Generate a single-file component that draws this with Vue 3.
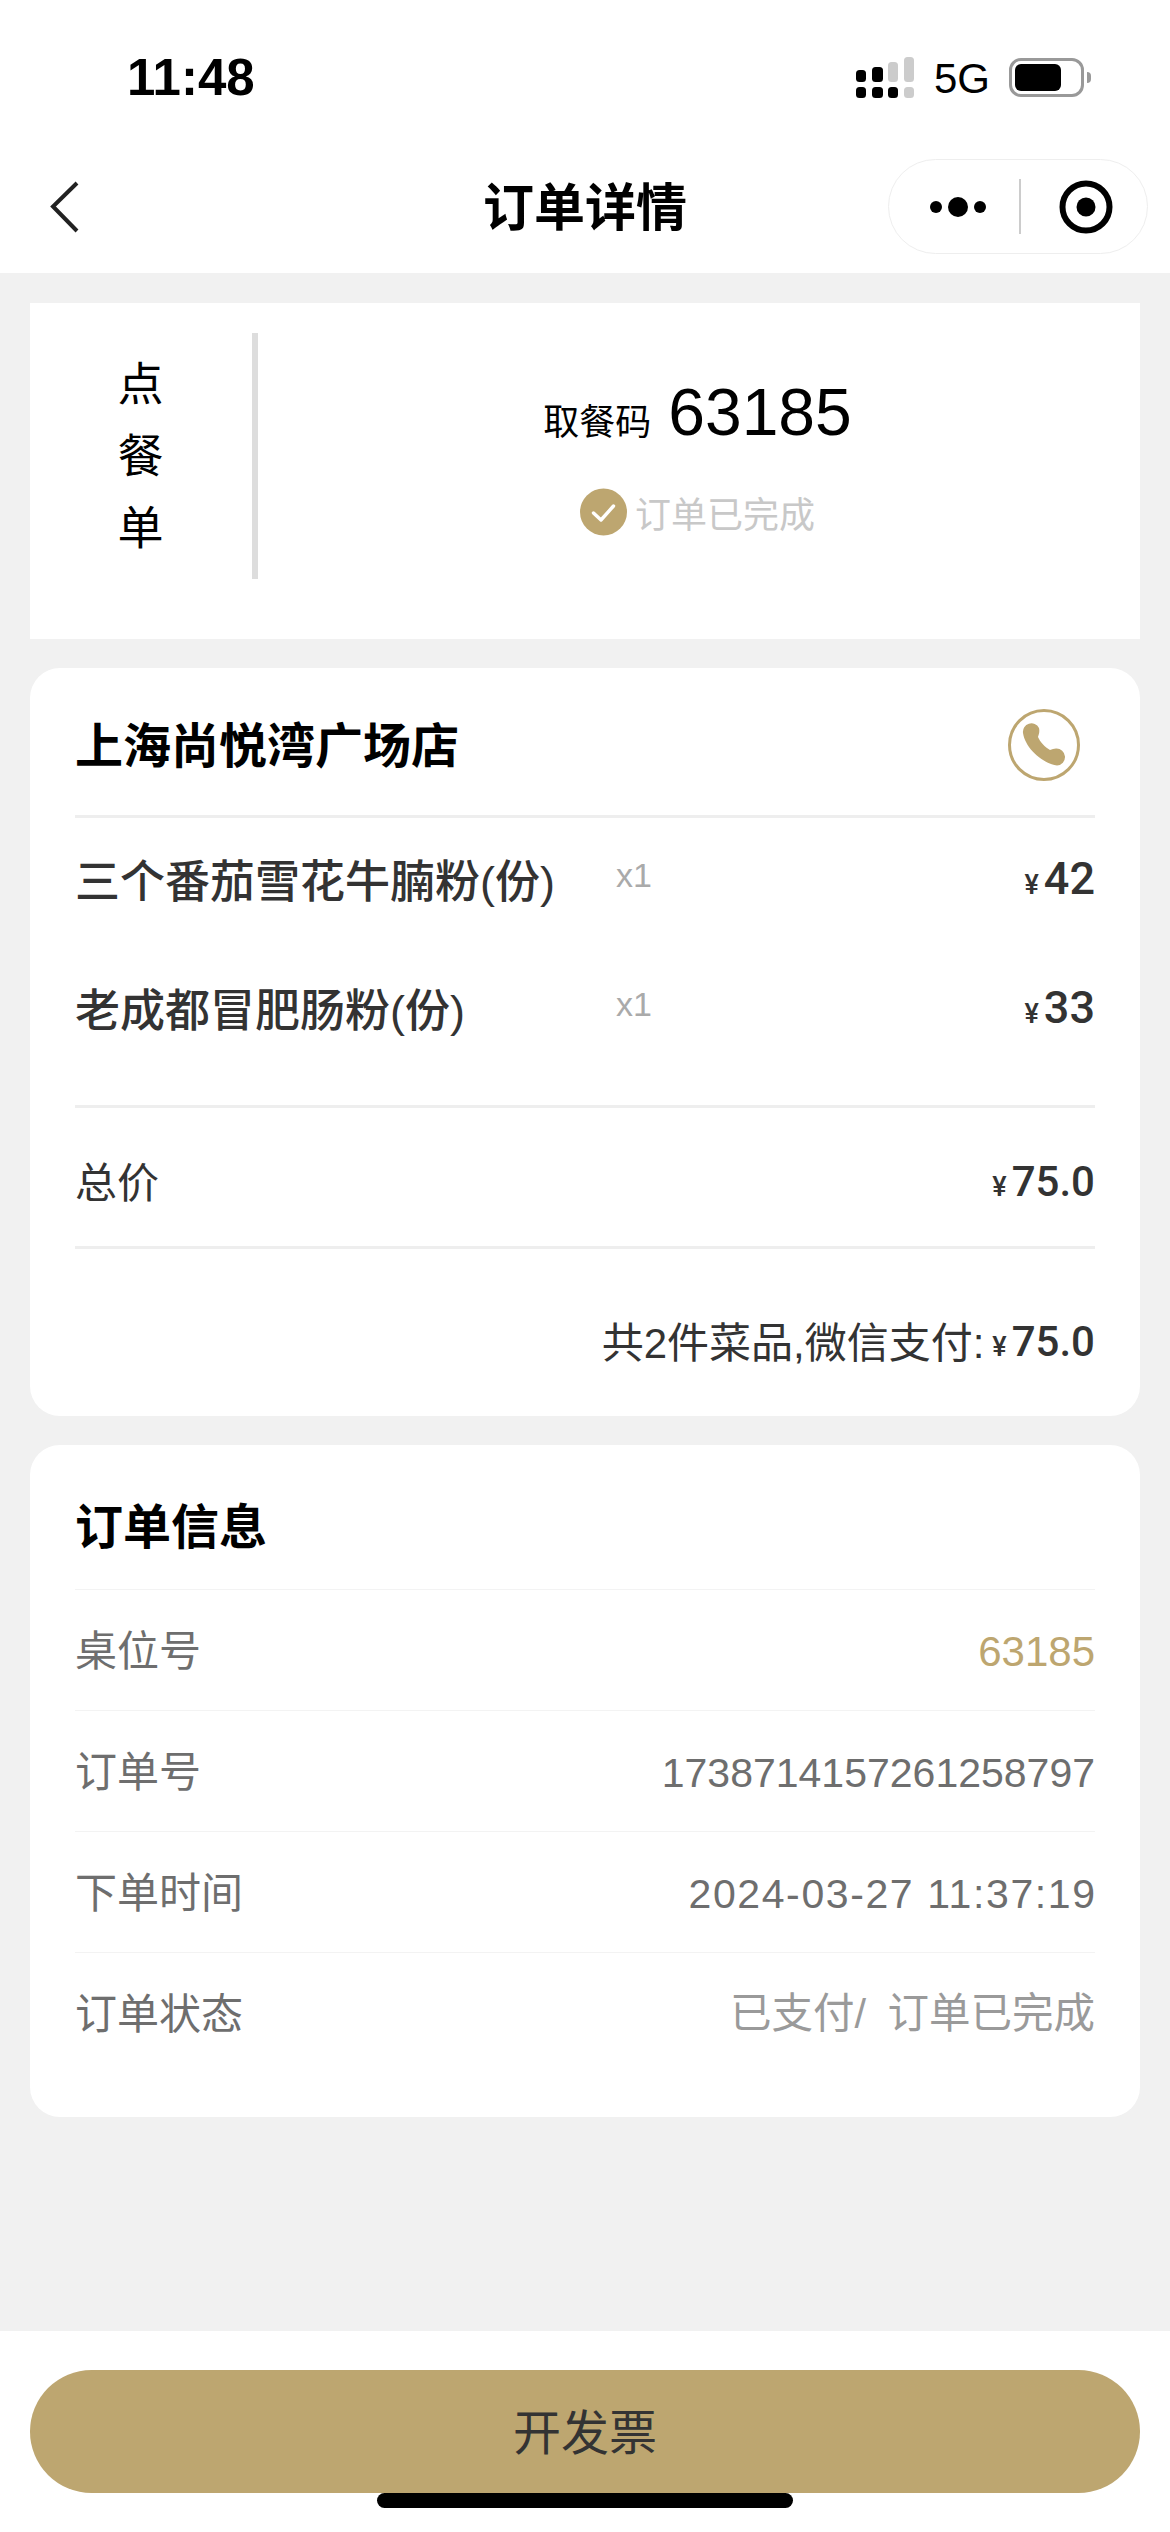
<template>
  <div class="page">
    <div class="statusbar">
      <span class="time">11:48</span>
      <div class="status-right">
        <svg class="signal" width="58" height="41" viewBox="0 0 58 41">
          <rect x="0" y="13" width="10" height="12" rx="3.5" fill="#000" />
          <rect x="16" y="10" width="11" height="15" rx="3.5" fill="#000" />
          <rect x="32" y="5" width="10" height="20" rx="3.5" fill="#ccc" />
          <rect x="48" y="0" width="10" height="25" rx="3.5" fill="#ccc" />
          <rect x="0" y="30" width="10" height="11" rx="3.5" fill="#000" />
          <rect x="16" y="30" width="11" height="11" rx="3.5" fill="#000" />
          <rect x="32" y="30" width="10" height="11" rx="3.5" fill="#000" />
          <rect x="48" y="30" width="10" height="11" rx="3.5" fill="#ccc" />
        </svg>
        <span class="net">5G</span>
        <div class="battery">
          <div class="battery-level"></div>
        </div>
        <div class="battery-nub"></div>
      </div>
    </div>

    <div class="navbar">
      <svg class="back" width="30" height="52" viewBox="0 0 30 52">
        <path d="M27 2 L3 25.5 L27 50" fill="none" stroke="#222" stroke-width="4" />
      </svg>
      <span class="nav-title">订单详情</span>
      <div class="capsule">
        <svg width="66" height="24" viewBox="0 0 66 24">
          <circle cx="8" cy="12" r="6" fill="#000" />
          <circle cx="30" cy="12" r="10" fill="#000" />
          <circle cx="52" cy="12" r="6" fill="#000" />
        </svg>
        <div class="capsule-line"></div>
        <svg width="54" height="54" viewBox="0 0 54 54">
          <circle cx="27" cy="27" r="23.5" fill="none" stroke="#000" stroke-width="6" />
          <circle cx="27" cy="27" r="9.5" fill="#000" />
        </svg>
      </div>
    </div>

    <div class="content">
      <div class="card-ticket">
        <div class="ticket-label">
          <span>点</span>
          <span>餐</span>
          <span>单</span>
        </div>
        <div class="ticket-main">
          <div class="pickup">
            <span class="pickup-label">取餐码</span>
            <span class="pickup-code">63185</span>
          </div>
          <div class="ticket-status">
            <svg width="47" height="48" viewBox="0 0 47 48">
              <circle cx="23.5" cy="24" r="23.5" fill="#bda670" />
              <path d="M13.5 25 L21 32 L33.5 18" fill="none" stroke="#fff" stroke-width="3.4" stroke-linecap="round" stroke-linejoin="round" />
            </svg>
            <span>订单已完成</span>
          </div>
        </div>
      </div>

      <div class="card card-order">
        <div class="store-row">
          <span class="store-name">上海尚悦湾广场店</span>
          <svg class="phone" width="72" height="72" viewBox="0 0 72 72">
            <circle cx="36" cy="36" r="34.5" fill="none" stroke="#bda670" stroke-width="3" />
            <path d="M15 24 A8.5 8.5 0 0 1 31 19 C32 23 30.5 26 30 28 C32 33 37 38 42 41 C44 40.5 46 39.5 48 39.5 A8.5 8.5 0 0 1 49 56.5 C33 54 17 38 15 24 Z" fill="#bda670" />
          </svg>
        </div>
        <div class="items">
          <div v-for="item in items" :key="item.name" class="item-row">
            <span class="item-name">{{ item.name }}</span>
            <span class="item-qty">x{{ item.qty }}</span>
            <span class="price"><i>¥</i>{{ item.price }}</span>
          </div>
        </div>
        <div class="total-row">
          <span>总价</span>
          <span class="price small"><i>¥</i>75.0</span>
        </div>
        <div class="summary-row">
          <span>共2件菜品,微信支付:</span>
          <span class="price small"><i>¥</i>75.0</span>
        </div>
      </div>

      <div class="card card-info">
        <div class="info-title">订单信息</div>
        <div v-for="row in infoRows" :key="row.label" class="info-row">
          <span class="info-label">{{ row.label }}</span>
          <span class="info-value" :class="row.cls">{{ row.value }}</span>
        </div>
      </div>
    </div>

    <div class="footer">
      <div class="invoice-btn">开发票</div>
      <div class="home-bar"></div>
    </div>
  </div>
</template>

<script setup>
const items = [
  { name: '三个番茄雪花牛腩粉(份)', qty: 1, price: 42 },
  { name: '老成都冒肥肠粉(份)', qty: 1, price: 33 }
]

const infoRows = [
  { label: '桌位号', value: '63185', cls: 'gold' },
  { label: '订单号', value: '1738714157261258797', cls: '' },
  { label: '下单时间', value: '2024-03-27 11:37:19', cls: 'date' },
  { label: '订单状态', value: '已支付/ 订单已完成', cls: 'light' }
]
</script>

<style>
html, body {
  margin: 0;
  background: #f1f1f1;
}
</style>

<style scoped>
.page {
  width: 1170px;
  height: 2532px;
  display: flex;
  flex-direction: column;
  overflow: hidden;
  background: #f1f1f1;
  font-family: "Liberation Sans", "Noto Sans CJK SC", sans-serif;
  color: #333;
}

.statusbar {
  height: 140px;
  flex: none;
  background: #fff;
  display: flex;
  justify-content: space-between;
  padding: 50px 79px 0 127px;
  box-sizing: border-box;
}

.time {
  font-size: 51px;
  font-weight: 700;
  line-height: 56px;
  color: #000;
}

.status-right {
  display: flex;
  align-items: flex-start;
  margin-top: 7px;
}

.net {
  font-size: 42px;
  line-height: 42px;
  color: #000;
  margin-left: 20px;
  margin-top: 1px;
}

.battery {
  width: 75px;
  height: 39px;
  box-sizing: border-box;
  border: 3px solid #999;
  border-radius: 12px;
  margin-left: 19px;
  margin-top: 1px;
  padding: 3px;
}

.battery-level {
  width: 46px;
  height: 27px;
  background: #000;
  border-radius: 6px;
}

.battery-nub {
  width: 4px;
  height: 11px;
  margin-left: 3px;
  margin-top: 15px;
  background: #999;
  border-radius: 0 4px 4px 0;
}

.navbar {
  height: 133px;
  flex: none;
  position: relative;
  background: #fff;
  display: flex;
  align-items: center;
  justify-content: space-between;
  padding: 0 22px 0 50px;
  box-sizing: border-box;
}

.nav-title {
  position: absolute;
  left: 0;
  right: 0;
  top: 41px;
  text-align: center;
  font-size: 51px;
  line-height: 56px;
  font-weight: 700;
  color: #000;
  pointer-events: none;
}

.capsule {
  width: 260px;
  height: 95px;
  box-sizing: border-box;
  border: 1.5px solid #eee;
  border-radius: 48px;
  display: flex;
  align-items: center;
  padding-left: 39px;
  background: #fff;
}

.capsule-line {
  width: 1.5px;
  height: 55px;
  background: #ccc;
  margin-left: 25px;
  margin-right: 38px;
}

.content {
  flex: 1;
  padding: 30px 30px 0;
  display: flex;
  flex-direction: column;
  gap: 29px;
}

.card-ticket {
  height: 336px;
  flex: none;
  background: #fff;
  display: flex;
  align-items: flex-start;
  padding-top: 30px;
  box-sizing: border-box;
}

.ticket-label {
  width: 223px;
  height: 246px;
  border-right: 6px solid #ddd;
  display: flex;
  flex-direction: column;
  align-items: center;
  justify-content: center;
  font-size: 46px;
  line-height: 72px;
  color: #000;
  box-sizing: content-box;
  margin-left: -1px;
}

.ticket-main {
  flex: 1;
  display: flex;
  flex-direction: column;
  align-items: center;
  padding-top: 41px;
  padding-right: 3px;
}

.pickup {
  display: flex;
  align-items: baseline;
  gap: 17px;
  color: #000;
}

.pickup-label {
  font-size: 36px;
}

.pickup-code {
  font-size: 66px;
  line-height: 76px;
}

.ticket-status {
  display: flex;
  align-items: center;
  gap: 8px;
  margin-top: 36px;
  font-size: 36px;
  color: #c8c8c8;
}

.card {
  background: #fff;
  border-radius: 30px;
  padding: 0 45px;
  flex: none;
}

.card-order {
  height: 748px;
  box-sizing: border-box;
}

.store-row {
  height: 150px;
  box-sizing: border-box;
  display: flex;
  align-items: center;
  justify-content: space-between;
  border-bottom: 3px solid #eee;
  padding-right: 15px;
}

.store-name {
  font-size: 48px;
  font-weight: 700;
  color: #000;
}

.phone {
  margin-top: 7px;
}

.items {
  height: 290px;
  box-sizing: border-box;
  border-bottom: 3px solid #eee;
}

.item-row {
  height: 129px;
  display: flex;
  align-items: center;
}

.item-name {
  width: 541px;
  flex: none;
  font-size: 45px;
  font-weight: 500;
  color: #333;
  margin-top: -8px;
}

.item-qty {
  font-size: 34px;
  color: #aaa;
  margin-top: -14px;
}

.price {
  margin-left: auto;
  font-family: Roboto, "Liberation Sans", sans-serif;
  font-weight: 500;
  font-size: 45px;
  color: #333;
}

.item-row .price {
  margin-top: -9px;
}

.price i {
  font-style: normal;
  font-size: 27px;
  margin-right: 5px;
}

.price.small {
  font-size: 42px;
  margin-top: 4px;
}

.total-row {
  height: 141px;
  box-sizing: border-box;
  display: flex;
  align-items: center;
  font-size: 42px;
  padding-top: 4px;
  border-bottom: 3px solid #eee;
}

.summary-row {
  height: 150px;
  display: flex;
  align-items: center;
  justify-content: flex-end;
  font-size: 42px;
  padding-top: 30px;
  box-sizing: border-box;
}

.summary-row .price {
  margin-left: 8px;
}

.card-info {
  height: 672px;
  box-sizing: border-box;
}

.info-title {
  height: 144px;
  display: flex;
  align-items: center;
  font-size: 48px;
  font-weight: 700;
  color: #000;
  box-sizing: border-box;
  padding-top: 12px;
}

.info-row {
  height: 121px;
  box-sizing: border-box;
  display: flex;
  align-items: center;
  justify-content: space-between;
  border-top: 1px solid #f3f3f3;
  font-size: 42px;
  color: #6e6e6e;
}

.info-label {
  margin-top: -6px;
}

.info-value {
  font-size: 41px;
  margin-top: 4px;
}

.gold {
  font-size: 42px;
  color: #bda670;
}

.date {
  letter-spacing: 1.6px;
  margin-right: -1.6px;
}

.light {
  font-size: 41.5px;
  word-spacing: 10px;
  color: #9a9a9a;
  margin-top: -6px;
}

.footer {
  height: 201px;
  flex: none;
  position: relative;
  background: #fff;
  padding: 39px 30px 0;
  box-sizing: border-box;
}

.invoice-btn {
  height: 123px;
  border-radius: 62px;
  background: #bda670;
  display: flex;
  align-items: center;
  justify-content: center;
  font-size: 48px;
  color: #333;
  padding-bottom: 6px;
  box-sizing: border-box;
}

.home-bar {
  position: absolute;
  left: 377px;
  bottom: 24px;
  width: 416px;
  height: 15px;
  background: #000;
  border-radius: 8px;
}
</style>
